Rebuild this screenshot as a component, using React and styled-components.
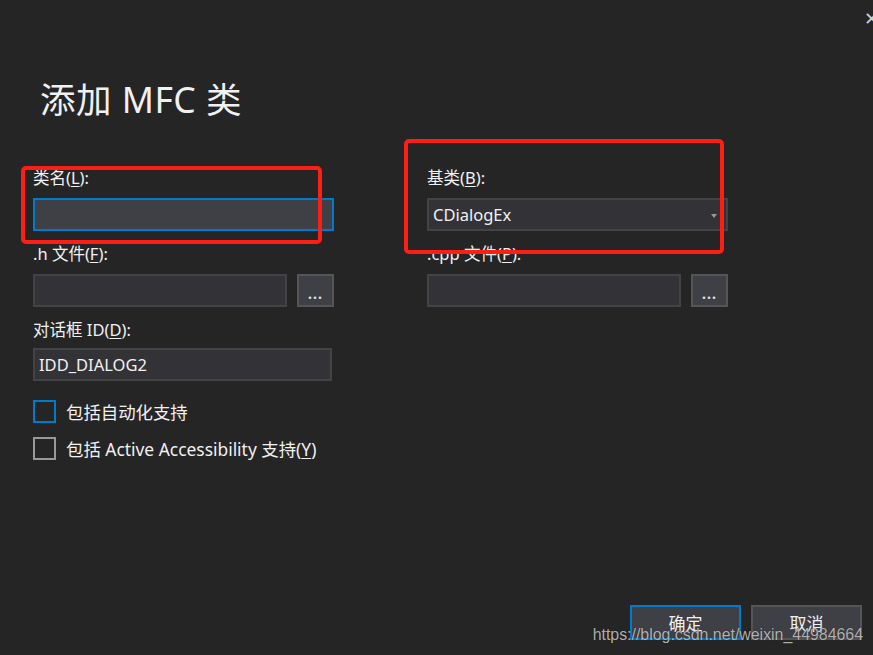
import React from "react";
import styled, { createGlobalStyle } from "styled-components";

const Global = createGlobalStyle`
  html, body { margin: 0; padding: 0; background: #252526; }
  body { font-family: "Noto Sans", "Noto Sans CJK SC", sans-serif; }
`;

const Dialog = styled.div`
  position: relative;
  width: 873px;
  height: 655px;
  background: #252526;
  color: #f1f1f1;
  display: flex;
  flex-direction: column;
  overflow: hidden;
  box-sizing: border-box;
  padding: 0 11px 15px 33px;
`;

const Close = styled.div`
  position: absolute;
  top: 8px;
  right: -6px;
  font-size: 18px;
  color: #d0d0d0;
  font-family: "DejaVu Sans", sans-serif;
`;

const Title = styled.h1`
  margin: 77px 0 0 7px;
  font-weight: 400;
  font-size: 35.5px;
  line-height: 44px;
  font-family: "Noto Sans", "Noto Sans CJK SC", sans-serif;
  letter-spacing: 0.5px;
`;

const Form = styled.div`
  margin-top: 46px;
  display: grid;
  grid-template-columns: 301px 301px;
  column-gap: 93px;
  row-gap: 12px;
`;

const Field = styled.div`
  display: flex;
  flex-direction: column;
`;

const Label = styled.label`
  font-size: 16.5px;
  line-height: 22px;
  height: 22px;
  margin-bottom: ${(p) => p.$gap || 9}px;
  white-space: nowrap;
  font-family: "Noto Sans", "Noto Sans CJK SC", sans-serif;
  u { text-decoration-thickness: 1px; text-underline-offset: 2px; }
`;

const InputRow = styled.div`
  display: flex;
  gap: 10px;
`;

const Input = styled.div`
  height: 33px;
  box-sizing: border-box;
  border: 2px solid ${(p) => (p.$focused ? "#007acc" : "#434346")};
  background: ${(p) => (p.$focused ? "#3f3f46" : "#333337")};
  font-size: 16.5px;
  line-height: 29px;
  padding: 0 4px;
  color: #f1f1f1;
  width: ${(p) => (p.$w ? p.$w + "px" : "auto")};
  flex: ${(p) => (p.$w ? "none" : 1)};
`;

const Combo = styled(Input)`
  display: flex;
  align-items: center;
  justify-content: space-between;
  padding-right: 9px;
`;

const Arrow = styled.span`
  width: 0;
  height: 0;
  border-left: 3px solid transparent;
  border-right: 3px solid transparent;
  border-top: 4px solid #999999;
  margin-top: 2px;
`;

const Browse = styled.div`
  width: 37px;
  height: 33px;
  box-sizing: border-box;
  border: 2px solid #555558;
  background: #3f3f46;
  display: flex;
  align-items: center;
  justify-content: center;
  padding-top: 6px;
  font-size: 14px;
  font-weight: 700;
  letter-spacing: 1px;
  color: #e0e0e0;
`;

const Checks = styled.div`
  margin-top: 19px;
  display: flex;
  flex-direction: column;
  gap: 14px;
`;

const CheckRow = styled.div`
  display: flex;
  align-items: center;
  gap: 10px;
  font-size: 17.4px;
  height: 23px;
  font-family: "Noto Sans", "Noto Sans CJK SC", sans-serif;
  u { text-decoration-thickness: 1px; text-underline-offset: 2px; }
`;

const Box = styled.span`
  width: 23px;
  height: 23px;
  box-sizing: border-box;
  border: 2px solid ${(p) => (p.$focused ? "#007acc" : "#999999")};
  background: #252526;
`;

const Footer = styled.div`
  margin-top: auto;
  display: flex;
  justify-content: flex-end;
  gap: 10px;
`;

const Button = styled.div`
  width: 111px;
  height: 35px;
  box-sizing: border-box;
  border: 2px solid ${(p) => (p.$primary ? "#007acc" : "#555558")};
  background: #3f3f46;
  display: flex;
  align-items: center;
  justify-content: center;
  font-size: 17px;
  font-family: "Noto Sans CJK SC", sans-serif;
`;

const Highlight = styled.div`
  position: absolute;
  border: 4px solid #ff1e14;
  border-radius: 5px;
  box-sizing: border-box;
  pointer-events: none;
`;

const Watermark = styled.div`
  position: absolute;
  right: 10px;
  bottom: 11px;
  font-family: "Liberation Sans", Arial, sans-serif;
  font-size: 15.9px;
  color: rgba(205, 205, 205, 0.85);
  text-shadow: 0 0 1px rgba(0, 0, 0, 0.6);
`;

export default function App() {
  return (
    <>
      <Global />
      <Dialog>
        <Close>✕</Close>
        <Title>添加 MFC 类</Title>
        <Form>
          <Field>
            <Label>类名(<u>L</u>):</Label>
            <Input $focused />
          </Field>
          <Field>
            <Label>基类(<u>B</u>):</Label>
            <Combo>
              <span>CDialogEx</span>
              <Arrow />
            </Combo>
          </Field>
          <Field>
            <Label>.h 文件(<u>F</u>):</Label>
            <InputRow>
              <Input />
              <Browse>...</Browse>
            </InputRow>
          </Field>
          <Field>
            <Label>.cpp 文件(<u>P</u>):</Label>
            <InputRow>
              <Input />
              <Browse>...</Browse>
            </InputRow>
          </Field>
          <Field>
            <Label $gap={7}>对话框 ID(<u>D</u>):</Label>
            <Input $w={299}>IDD_DIALOG2</Input>
          </Field>
        </Form>
        <Checks>
          <CheckRow>
            <Box $focused />
            包括自动化支持
          </CheckRow>
          <CheckRow>
            <Box />
            <span>包括 Active Accessibility 支持(<u>Y</u>)</span>
          </CheckRow>
        </Checks>
        <Footer>
          <Button $primary>确定</Button>
          <Button>取消</Button>
        </Footer>
        <Highlight style={{ left: 21, top: 166, width: 301, height: 78 }} />
        <Highlight style={{ left: 404, top: 139, width: 320, height: 115 }} />
        <Watermark>https://blog.csdn.net/weixin_44984664</Watermark>
      </Dialog>
    </>
  );
}
